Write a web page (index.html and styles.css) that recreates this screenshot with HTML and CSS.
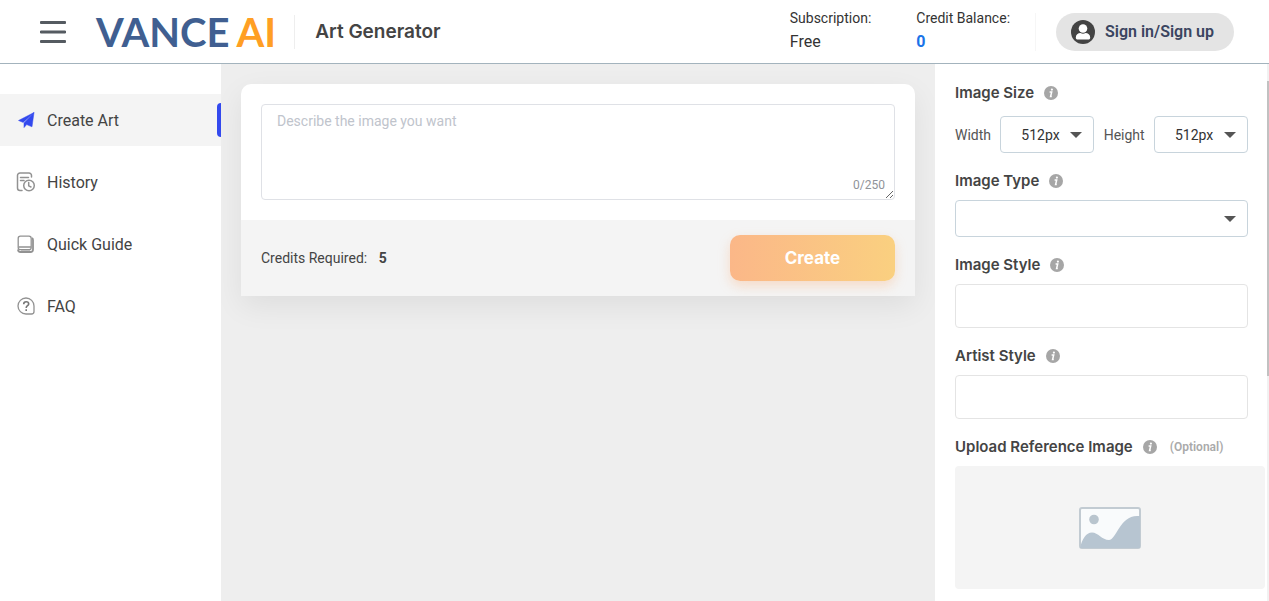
FILE: index.html
```html
<!DOCTYPE html>
<html lang="en">
<head>
    <meta charset="UTF-8">
    <meta name="viewport" content="width=device-width, initial-scale=1.0">
    <title>VanceAI Art Generator</title>
    <link rel="stylesheet" href="styles.css">
</head>
<body>
    <svg class="sprite" width="0" height="0" aria-hidden="true">
        <symbol id="info" viewBox="0 0 14 14">
            <circle cx="7" cy="7" r="7" fill="#a6a6a6"/>
            <circle cx="7.9" cy="3.6" r="1.1" fill="#fff"/>
            <path d="M5.6 6h2.1L6.6 10.6h1.2" fill="none" stroke="#fff" stroke-width="1.5"/>
        </symbol>
        <symbol id="caret" viewBox="0 0 12 6">
            <path d="M0 0h12L6 6z" fill="#555"/>
        </symbol>
    </svg>

    <header class="header">
        <button class="menu-btn" aria-label="Menu">
            <svg width="26" height="22" viewBox="0 0 26 22"><path d="M1 1.5h24M1 11h24M1 20.500h24" stroke="#555b61" stroke-width="2.800" stroke-linecap="round"/></svg>
        </button>
        <a class="logo" href="#">VANCE<span>AI</span></a>
        <h1 class="page-title">Art Generator</h1>
        <div class="account">
            <div class="account-item">
                <span>Subscription:</span>
                <span class="account-value">Free</span>
            </div>
            <div class="account-item">
                <span>Credit Balance:</span>
                <span class="account-value credit">0</span>
            </div>
        </div>
        <div class="sign">
            <button class="sign-btn">
                <svg width="24" height="24" viewBox="0 0 24 24">
                    <circle cx="12" cy="12" r="12" fill="#444"/>
                    <circle cx="12" cy="8.500" r="4.300" fill="#fff"/>
                    <path d="M4.800 17.500c0-3 2.200-4.500 4.700-4.500 1.500 1 3.500 1 5 0 2.500 0 4.700 1.500 4.700 4.500 0 1.500-.7 2-2 2H6.800c-1.300 0-2-.5-2-2z" fill="#fff"/>
                </svg>
                Sign in/Sign up
            </button>
        </div>
    </header>

    <div class="layout">
        <nav class="sidebar">
            <a class="nav-item active" href="#">
                <svg width="18" height="18" viewBox="0 0 18 18"><path d="M17 1.500 1.500 9.500l4.700 2zM17 1.500 7 12v4.600l2.700-3 5.300 2.200z" fill="#3349ee" stroke="#3349ee" stroke-width=".5" stroke-linejoin="round"/></svg>
                Create Art
            </a>
            <a class="nav-item" href="#">
                <svg width="20" height="20" viewBox="0 0 20 20" fill="none" stroke="#929292" stroke-width="1.500" stroke-linecap="round">
                    <path d="M6 18.500H4A2.500 2.500 0 0 1 1.500 16V3.500A2.500 2.500 0 0 1 4 1h9a2.500 2.500 0 0 1 2.500 2.500V5M4.500 5.500h8M4.500 8.500H8"/>
                    <circle cx="13" cy="13.500" r="5.300"/>
                    <path d="M12.700 10.500v3.300l2.300 1.200"/>
                </svg>
                History
            </a>
            <a class="nav-item" href="#">
                <svg width="18" height="18" viewBox="0 0 18 18" fill="none" stroke="#929292">
                    <path d="M15 3q1 .5 1 2v9.500q0 2.500-2.500 2.500h-10Q1 17 1 14.500" stroke-width="1.800"/>
                    <rect x="1.200" y="1.200" width="13" height="13.500" rx="2.200" stroke-width="1.300"/>
                    <path d="M1.500 12h12.500M4 14.700h9" stroke-width="1.400"/>
                </svg>
                Quick Guide
            </a>
            <a class="nav-item" href="#">
                <svg width="18" height="18" viewBox="0 0 18 18" fill="none" stroke="#929292" stroke-width="1.300">
                    <path d="M9 1a8 8 0 0 0 0 16h5.500q2.500 0 2.500-2.500V9a8 8 0 0 0-8-8z"/>
                    <path d="M6.700 7.200c0-3.400 5-3.100 5-.3 0 1.800-2.500 1.900-2.500 4M9.200 12.200V14" stroke="#777" stroke-width="1.600"/>
                </svg>
                FAQ
            </a>
        </nav>

        <main class="main">
            <form class="card">
                <div class="prompt">
                    <textarea class="prompt-text" maxlength="250" aria-label="Prompt" placeholder="Describe the image you want"></textarea>
                    <span class="prompt-count">0/250</span>
                </div>
                <div class="card-footer">
                    <span>Credits Required: <b>5</b></span>
                    <button type="button" class="create-btn">Create</button>
                </div>
            </form>
        </main>

        <aside class="options">
            <section class="option">
                <h2>Image Size <svg class="info"><use href="#info"/></svg></h2>
                <div class="size-row">
                    <label for="width">Width</label>
                    <div class="select">
                        <select id="width"><option>512px</option></select>
                        <svg class="caret"><use href="#caret"/></svg>
                    </div>
                    <label for="height">Height</label>
                    <div class="select">
                        <select id="height"><option>512px</option></select>
                        <svg class="caret"><use href="#caret"/></svg>
                    </div>
                </div>
            </section>
            <section class="option">
                <h2><label for="type">Image Type</label> <svg class="info"><use href="#info"/></svg></h2>
                <div class="select">
                    <select id="type"><option></option></select>
                    <svg class="caret"><use href="#caret"/></svg>
                </div>
            </section>
            <section class="option">
                <h2><label for="style">Image Style</label> <svg class="info"><use href="#info"/></svg></h2>
                <input type="text" id="style">
            </section>
            <section class="option">
                <h2><label for="artist">Artist Style</label> <svg class="info"><use href="#info"/></svg></h2>
                <input type="text" id="artist">
            </section>
            <section class="option">
                <h2>Upload Reference Image <svg class="info"><use href="#info"/></svg> <small>(Optional)</small></h2>
                <button class="upload" aria-label="Upload Reference Image">
                    <svg width="62" height="42" viewBox="0 0 62 42">
                        <rect x="1" y="1" width="60" height="40" rx="2" fill="#f9fbfc" stroke="#c2cbd2" stroke-width="2"/>
                        <circle cx="15" cy="12.500" r="4.800" fill="#b9c5ce"/>
                        <path d="M1 41C3 32 7 25.500 13 25.500S23 33 30 33c7 0 11-24 28-24h3v32z" fill="#b7c5d1"/>
                    </svg>
                </button>
            </section>
            <div class="scroll-thumb"></div>
        </aside>
    </div>
</body>
</html>
```
FILE: styles.css
```css
* {
    box-sizing: border-box;
}
body {
    margin: 0;
    min-height: 100vh;
    display: flex;
    flex-direction: column;
    font-family: Roboto, sans-serif;
    font-size: 14px;
    color: #444;
    background: #eee;
}
button, input, select, textarea {
    font-family: inherit;
}
button {
    border: none;
    padding: 0;
    cursor: pointer;
}
h1, h2 {
    margin: 0;
    font-family: Inter, sans-serif;
    font-weight: 600;
}
svg {
    flex-shrink: 0;
}
.sprite {
    position: absolute;
}

/* header */
.header {
    display: flex;
    align-items: center;
    height: 64px;
    padding: 0 35px 0 40px;
    background: #fff;
    border-bottom: 1px solid #a3b3bd;
}
.menu-btn {
    display: flex;
    background: none;
    margin-right: 30px;
}
.logo {
    font-family: Lato, sans-serif;
    font-size: 40px;
    font-weight: 700;
    line-height: 40px;
    color: #405f91;
    text-decoration: none;
}
.logo span {
    margin-left: 7px;
    color: #ff9f24;
}
.page-title {
    margin-left: 18px;
    padding-left: 20px;
    border-left: 1px solid #eee;
    font-size: 19px;
    line-height: 34px;
}
.account {
    display: flex;
    gap: 45px;
    margin-left: auto;
    padding-bottom: 4px;
}
.account-item {
    display: flex;
    flex-direction: column;
    line-height: 23px;
    color: #333;
}
.account-value {
    font-size: 16px;
}
.credit {
    font-weight: 700;
    color: #1a73e8;
}
.sign {
    margin-left: 25px;
    padding-left: 20px;
    border-left: 1px solid #f6f6f6;
}
.sign-btn {
    display: flex;
    align-items: center;
    gap: 10px;
    height: 38px;
    padding: 0 20px 0 15px;
    border-radius: 20px;
    background: #e4e4e4;
    color: #3a4560;
    font-size: 16px;
    font-weight: 600;
}

/* layout */
.layout {
    display: flex;
    flex: 1;
}
.sidebar {
    display: flex;
    flex-direction: column;
    gap: 10px;
    width: 221px;
    padding-top: 30px;
    background: #fff;
}
.nav-item {
    display: flex;
    align-items: center;
    height: 52px;
    padding-left: 16px;
    font-size: 16px;
    color: #444;
    text-decoration: none;
}
.nav-item svg {
    width: 20px;
    margin-right: 11px;
}
.nav-item.active {
    background: #f4f4f4;
}
.nav-item.active::after {
    content: "";
    width: 4px;
    height: 34px;
    margin-left: auto;
    border-radius: 4px 0 0 4px;
    background: #3349ee;
}
.main {
    flex: 1;
    padding: 20px;
    overflow: hidden;
}

/* prompt card */
.card {
    border-radius: 10px 10px 0 0;
    background: #fff;
    box-shadow: 0 10px 30px rgba(0, 0, 0, 0.07);
}
.prompt {
    position: relative;
    padding: 20px;
}
.prompt-text {
    display: block;
    width: 100%;
    height: 96px;
    padding: 7px 15px;
    border: 1px solid #dfe1e6;
    border-radius: 4px;
    resize: vertical;
    font-size: 14px;
    line-height: 18px;
}
.prompt-text::placeholder {
    color: #c0c4cc;
}
.prompt-count {
    position: absolute;
    right: 30px;
    bottom: 27px;
    font-size: 12px;
    line-height: 16px;
    color: #909399;
}
.card-footer {
    display: flex;
    align-items: center;
    justify-content: space-between;
    height: 76px;
    padding: 0 20px;
    background: #f4f4f4;
}
.card-footer b {
    margin-left: 8px;
}
.create-btn {
    width: 165px;
    height: 46px;
    border-radius: 10px;
    background: linear-gradient(90deg, #fbb788, #fad080);
    box-shadow: 0 5px 12px rgba(251, 183, 136, 0.4);
    color: #fff;
    font-family: Inter, sans-serif;
    font-size: 17px;
    font-weight: 700;
}

/* options panel */
.options {
    position: relative;
    width: 334px;
    padding: 17px 19px 11px 20px;
    display: flex;
    flex-direction: column;
    gap: 16px;
    background: #fff;
    border-right: 2px solid #f1f1f1;
}
.option h2 {
    display: flex;
    align-items: center;
    margin-bottom: 7px;
    font-size: 15px;
    line-height: 24px;
}
.info {
    width: 14px;
    height: 14px;
    margin-left: 10px;
}
.option small {
    margin-left: 13px;
    font-family: Roboto, sans-serif;
    font-size: 12px;
    color: #aaa;
}
.size-row {
    display: flex;
    align-items: center;
    justify-content: space-between;
    margin-top: 11px;
    color: #555;
}
.size-row .select {
    width: 94px;
}
.select {
    position: relative;
}
.select select {
    display: block;
    appearance: none;
    width: 100%;
    height: 37px;
    padding: 0 20px;
    border: 1px solid #c8d4dc;
    border-radius: 4px;
    background: #fff;
    font-size: 14px;
    color: #333;
}
.caret {
    position: absolute;
    top: 16px;
    right: 12px;
    width: 12px;
    height: 6px;
    pointer-events: none;
}
.option input {
    display: block;
    width: 100%;
    height: 44px;
    padding: 0 15px;
    border: 1px solid #e4e4e4;
    border-radius: 4px;
}
.upload {
    display: flex;
    align-items: center;
    justify-content: center;
    width: 310px;
    height: 123px;
    border-radius: 4px;
    background: #f4f4f4;
}
.scroll-thumb {
    position: absolute;
    top: 17px;
    right: -2px;
    width: 2px;
    height: 295px;
    background: #c1c1c1;
}
```
